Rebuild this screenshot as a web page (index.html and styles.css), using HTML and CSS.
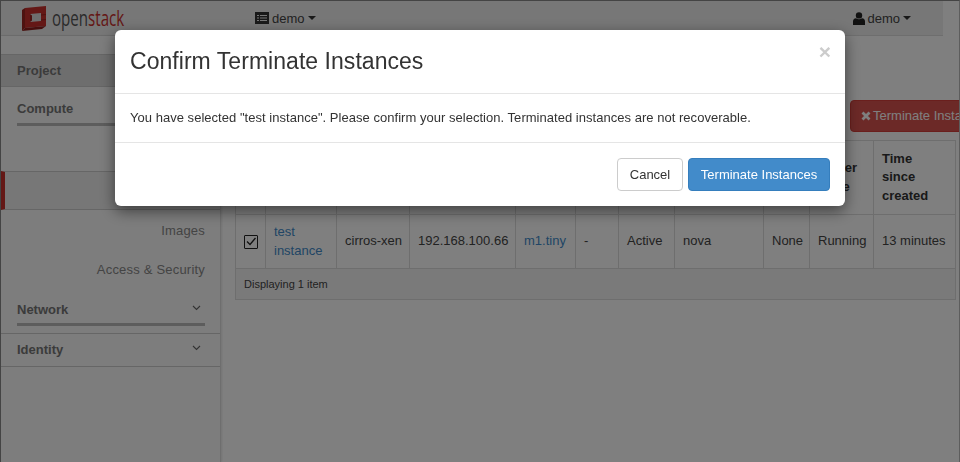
FILE: index.html
```html
<!DOCTYPE html>
<html lang="en">
<head>
  <meta charset="UTF-8">
  <meta name="viewport" content="width=device-width, initial-scale=1.0">
  <title>Instances - OpenStack Dashboard</title>
  <link rel="stylesheet" href="styles.css">
</head>
<body>
  <div class="page">
    <!-- Top bar -->
    <header class="topbar">
      <div class="brand">
        <svg class="brand-mark" width="25" height="25" viewBox="0 0 25 25">
          <path d="M3 2 L24 0 L24 20 L3 22 Z" fill="#c9302c"/>
          <path d="M3 2 L0 4 L0 25 L3 22 Z" fill="#9c2420"/>
          <path d="M0 25 L3 22 L24 20 L20 23 Z" fill="#8f1f1c"/>
          <path d="M8 8 L19 7 L19 15 L8 16 Z" fill="#ddd"/>
          <path d="M8 8 L10 9.5 L10 14.5 L8 16 Z" fill="#9c2420"/>
          <path d="M0 10 L3 9.5 M0 17 L3 16.5 M19 9 L24 8.5 M19 14 L24 13.5" stroke="#9c2420" stroke-width="1"/>
        </svg>
        <span class="brand-name">open<b>stack</b></span>
      </div>
      <div class="tenant">
        <svg width="14" height="12" viewBox="0 0 14 12"><path d="M0 0 H14 V12 H0 Z" fill="#333"/><path d="M5 3 H12 V4 H5 Z M5 5.5 H12 V6.5 H5 Z M5 8 H12 V9 H5 Z M2 3 H4 V4 H2 Z M2 5.5 H4 V6.5 H2 Z M2 8 H4 V9 H2 Z" fill="#eee"/></svg>
        demo <span class="caret"></span>
      </div>
      <div class="user">
        <svg width="12" height="13" viewBox="0 0 12 13"><circle cx="6" cy="3.4" r="3.2" fill="#222"/><path d="M0 13 V9.5 Q0 6.5 3 6.2 Q6 8.2 9 6.2 Q12 6.5 12 9.5 V13 Z" fill="#222"/></svg>
        demo <span class="caret"></span>
      </div>
    </header>

    <div class="layout">
      <!-- Sidebar -->
      <nav class="sidebar">
        <div class="side-project">Project</div>
        <div class="side-group side-compute">Compute</div>
        <div class="side-link side-overview">Overview</div>
        <div class="side-link side-active">Instances</div>
        <div class="side-link">Images</div>
        <div class="side-link">Access &amp; Security</div>
        <div class="side-group side-network">
          Network
          <svg class="chev" width="9" height="6" viewBox="0 0 9 6"><path d="M1 1 L4.5 4.5 L8 1" fill="none" stroke="#666" stroke-width="1.1"/></svg>
        </div>
        <div class="side-group side-identity">
          Identity
          <svg class="chev" width="9" height="6" viewBox="0 0 9 6"><path d="M1 1 L4.5 4.5 L8 1" fill="none" stroke="#666" stroke-width="1.1"/></svg>
        </div>
      </nav>

      <!-- Main content -->
      <main class="content">
        <h1 class="page-title">Instances</h1>
        <div class="toolbar">
          <div class="filter"></div>
          <button class="btn-danger">
            <svg width="10" height="10" viewBox="0 0 10 10"><path d="M1.5 1.5 L8.5 8.5 M8.5 1.5 L1.5 8.5" stroke="#fff" stroke-width="2.8"/></svg>
            Terminate Instances
          </button>
        </div>

        <table class="instances">
          <colgroup>
            <col class="c-check"><col class="c-name"><col class="c-image"><col class="c-ip"><col class="c-size">
            <col class="c-key"><col class="c-status"><col class="c-zone"><col class="c-task"><col class="c-power"><col class="c-time">
          </colgroup>
          <thead>
            <tr>
              <th></th>
              <th>Instance Name</th>
              <th>Image Name</th>
              <th>IP Address</th>
              <th>Size</th>
              <th>Key Pair</th>
              <th>Status</th>
              <th>Availability Zone</th>
              <th>Task</th>
              <th>Power State</th>
              <th>Time since created</th>
            </tr>
          </thead>
          <tbody>
            <tr>
              <td><span class="check"><svg width="10" height="9" viewBox="0 0 10 9"><path d="M1 4.5 L4 7.5 L9.5 1" fill="none" stroke="#222" stroke-width="1.3"/></svg></span></td>
              <td><a class="link">test instance</a></td>
              <td class="nowrap">cirros-xen</td>
              <td class="nowrap">192.168.100.66</td>
              <td><a class="link">m1.tiny</a></td>
              <td>-</td>
              <td>Active</td>
              <td>nova</td>
              <td>None</td>
              <td>Running</td>
              <td class="nowrap">13 minutes</td>
            </tr>
          </tbody>
          <tfoot>
            <tr><td colspan="11">Displaying 1 item</td></tr>
          </tfoot>
        </table>
      </main>
    </div>
  </div>

  <div class="backdrop"></div>

  <!-- Confirm dialog -->
  <div class="modal-wrap">
    <div class="modal">
      <div class="modal-header">
        <h3>Confirm Terminate Instances</h3>
        <span class="close">×</span>
      </div>
      <div class="modal-body">You have selected "test instance". Please confirm your selection. Terminated instances are not recoverable.</div>
      <div class="modal-footer">
        <button class="btn-cancel">Cancel</button>
        <button class="btn-primary">Terminate Instances</button>
      </div>
    </div>
  </div>
</body>
</html>
```

FILE: styles.css
```css
/* Basic styling */
html, body {
  height: 100%;
  margin: 0;
  overflow: hidden;
}

body {
  font-family: 'Liberation Sans', Arial, sans-serif;
  font-size: 13px;
  color: #333;
  background: #fff;
}

.page {
  height: 100%;
  box-sizing: border-box;
  border-left: 1px solid #888;
  border-right: 1px solid #bbb;
  border-top: 1px solid #888;
  overflow: hidden;
}

/* Top bar */
.topbar {
  display: flex;
  align-items: center;
  height: 35px;
  margin-right: 16px;
  background: #eee;
  border-bottom: 1px solid #ddd;
  box-sizing: border-box;
}

.brand {
  display: flex;
  align-items: center;
  width: 254px;
  padding-left: 21px;
  box-sizing: border-box;
}

.brand-mark {
  margin-right: 5px;
}

.brand-name {
  display: inline-block;
  font-family: 'Open Sans', sans-serif;
  font-size: 21px;
  color: #555;
  transform: scaleX(0.72);
  transform-origin: left center;
}

.brand-name b {
  font-weight: 400;
  color: #c9302c;
}

.tenant, .user {
  display: flex;
  align-items: center;
  gap: 3px;
  color: #444;
}

.user {
  margin-left: auto;
  margin-right: 32px;
}

.user svg {
  margin-right: -1px;
}

.caret {
  width: 0;
  height: 0;
  border-top: 4px solid #333;
  border-left: 4px solid transparent;
  border-right: 4px solid transparent;
}

.layout {
  display: flex;
  height: 426px;
}

/* Sidebar */
.sidebar {
  flex: 0 0 220px;
  box-sizing: border-box;
  background: #fafafa;
  border-right: 1px solid #ddd;
  box-shadow: 1px 0 2px rgba(0, 0, 0, 0.1);
}

.side-project {
  margin-top: 18px;
  height: 33px;
  line-height: 32px;
  padding-left: 16px;
  box-sizing: border-box;
  background: #ddd;
  border-top: 1px solid #ccc;
  border-bottom: 1px solid #ccc;
  font-weight: bold;
  color: #777;
}

.side-group {
  position: relative;
  font-weight: bold;
  color: #777;
  padding-left: 16px;
}

.side-compute {
  height: 47px;
  line-height: 44px;
}

.side-compute::after, .side-network::after {
  content: "";
  display: block;
  width: 188px;
  height: 3px;
  background: #bbb;
}

.side-compute::after {
  margin-top: -8px;
}

.side-network {
  height: 46px;
  line-height: 44px;
  box-sizing: border-box;
  border-bottom: 1px solid #ccc;
}

.side-network::after {
  margin-top: -9px;
}

.side-identity {
  height: 33px;
  line-height: 32px;
  box-sizing: border-box;
  border-bottom: 1px solid #ccc;
}

.chev {
  position: absolute;
  right: 19px;
  top: 17px;
}

.side-identity .chev {
  top: 11px;
}

.side-link {
  height: 39px;
  line-height: 41px;
  text-align: right;
  padding-right: 15px;
  letter-spacing: 0.2px;
  color: #888;
}

.side-overview {
  height: 37px;
  line-height: 37px;
}

.side-active {
  box-sizing: border-box;
  border-top: 1px solid #ccc;
  border-bottom: 1px solid #ccc;
  border-left: 4px solid #c9302c;
  background: #eee;
}

/* Main content */
.content {
  flex: 1;
  min-width: 0;
  padding-left: 14px;
  overflow: hidden;
}

.page-title {
  margin: 0;
  height: 64px;
  line-height: 60px;
  font-size: 24px;
  font-weight: 400;
}

.toolbar {
  display: flex;
  gap: 15px;
}

.filter {
  flex: 0 0 600px;
}

.btn-danger {
  flex-shrink: 0;
  display: flex;
  align-items: center;
  gap: 2px;
  height: 32px;
  padding: 0 10px 1px;
  font: inherit;
  color: #fff;
  background: #d9534f;
  border: 1px solid #d43f3a;
  border-radius: 4px;
  white-space: nowrap;
}

/* Table */
.instances {
  table-layout: fixed;
  width: 720px;
  margin-top: 8px;
  border-collapse: collapse;
}

.instances th, .instances td {
  border: 1px solid #ddd;
  padding: 0 8px;
  line-height: 18.5px;
  text-align: left;
  font-weight: normal;
  color: #444;
}

.instances th {
  height: 73px;
  padding-right: 12px;
  font-weight: bold;
  color: #333;
}

.instances tbody td {
  height: 53px;
}

.instances tfoot td {
  height: 30px;
  font-size: 11px;
  background: #f5f5f5;
}

.instances .nowrap {
  white-space: nowrap;
}

.c-check { width: 30px; }
.c-name { width: 71px; }
.c-image { width: 73px; }
.c-ip { width: 106px; }
.c-size { width: 60px; }
.c-key { width: 43px; }
.c-status { width: 56px; }
.c-zone { width: 89px; }
.c-task { width: 46px; }
.c-power { width: 64px; }
.c-time { width: 82px; }

.link {
  color: #428bca;
}

.check {
  display: flex;
  align-items: center;
  justify-content: center;
  width: 12px;
  height: 12px;
  border: 1px solid #222;
  border-radius: 1px;
}

/* Modal */
.backdrop {
  position: fixed;
  inset: 0;
  background: rgba(0, 0, 0, 0.5);
}

.modal-wrap {
  position: fixed;
  inset: 0;
  display: flex;
  justify-content: center;
  align-items: flex-start;
  padding-top: 30px;
}

.modal {
  width: 730px;
  background: #fff;
  border-radius: 6px;
  box-shadow: 0 5px 15px rgba(0, 0, 0, 0.5);
}

.modal-header {
  display: flex;
  justify-content: space-between;
  align-items: flex-start;
  height: 64px;
  padding: 15px;
  box-sizing: border-box;
  border-bottom: 1px solid #e5e5e5;
}

.modal-header h3 {
  margin: 0;
  font-size: 23px;
  font-weight: 400;
  line-height: 32px;
  letter-spacing: 0.04px;
}

.close {
  margin: -1px -1px 0 0;
  font-size: 21px;
  font-weight: bold;
  line-height: 15px;
  color: #ccc;
}

.modal-body {
  height: 48px;
  line-height: 48px;
  padding: 0 15px;
  box-sizing: border-box;
  letter-spacing: 0.03px;
}

.modal-footer {
  display: flex;
  justify-content: flex-end;
  gap: 5px;
  height: 64px;
  padding: 15px;
  box-sizing: border-box;
  border-top: 1px solid #e5e5e5;
}

.modal-footer button {
  height: 33px;
  font: inherit;
  border-radius: 4px;
}

.btn-cancel {
  width: 66px;
  color: #333;
  background: #fff;
  border: 1px solid #ccc;
}

.btn-primary {
  width: 142px;
  color: #fff;
  background: #428bca;
  border: 1px solid #357ebd;
}
```
